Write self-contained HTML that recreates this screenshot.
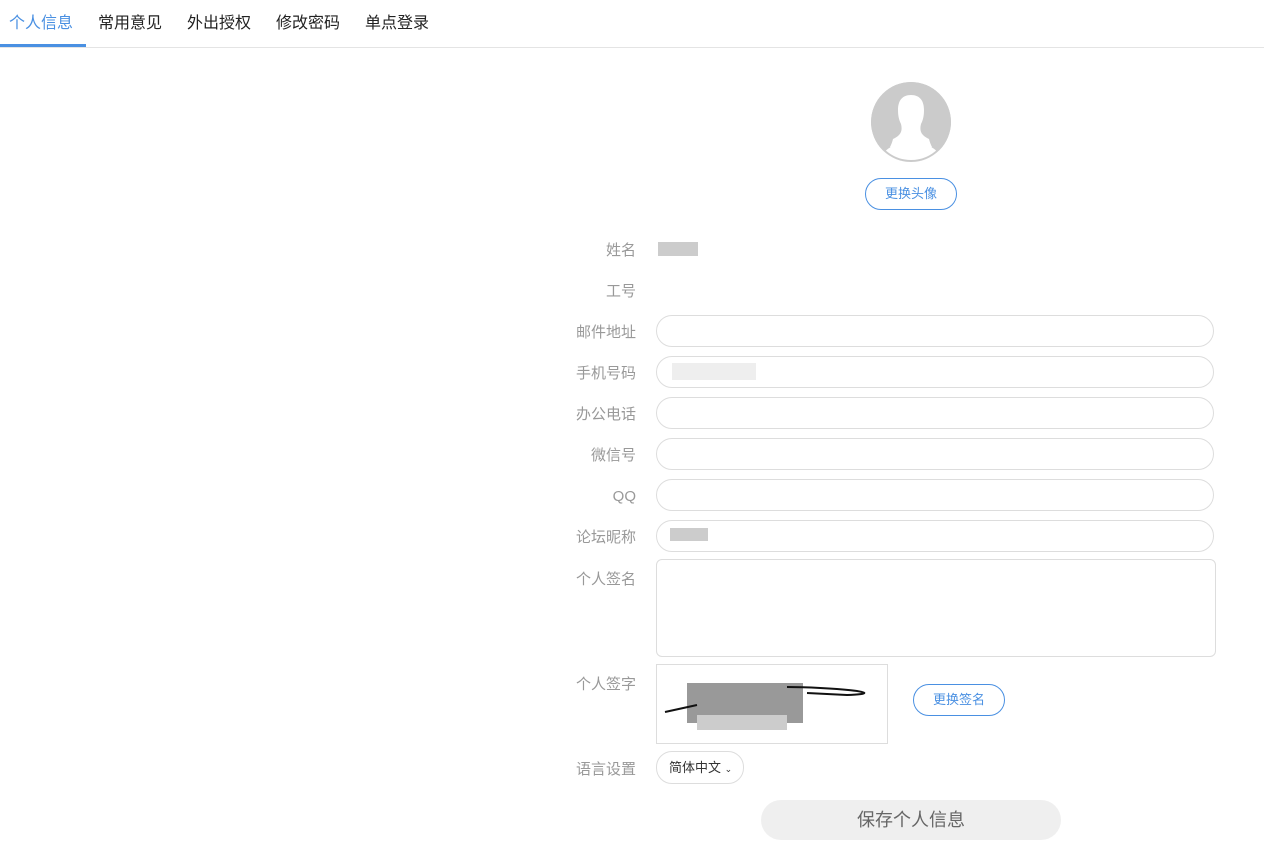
<!DOCTYPE html>
<html><head><meta charset="utf-8"><style>
*{box-sizing:border-box;margin:0;padding:0}
body{width:1264px;height:853px;background:#fff;font-family:"Liberation Sans","Noto Sans CJK SC",sans-serif;position:relative;overflow:hidden}
.tabs{position:absolute;left:0;top:0;width:1264px;height:48px;border-bottom:1px solid #e4e4e4}
.tab{position:absolute;top:14px;font-size:16px;color:#222;line-height:20px}
.ul{position:absolute;left:0;top:44px;width:86px;height:3px;background:#4a90e2}
.lbl{position:absolute;right:628px;font-size:15px;color:#999;line-height:20px;text-align:right;margin-top:2px}
.inp{position:absolute;left:656px;width:558px;height:32px;border:1px solid #ddd;border-radius:16px}
.av{position:absolute;left:871px;top:82px;width:80px;height:80px;border-radius:50%;background:#cbcbcb;overflow:hidden}
.btn{position:absolute;border:1px solid #4a90e2;border-radius:16px;color:#4a90e2;font-size:13px;text-align:center}
.blur{position:absolute;background:#ddd}
</style></head><body>
<div class="tabs">
<div class="tab" style="left:9px;color:#4a90e2">个人信息</div>
<div class="tab" style="left:98px">常用意见</div>
<div class="tab" style="left:187px">外出授权</div>
<div class="tab" style="left:276px">修改密码</div>
<div class="tab" style="left:365px">单点登录</div>
<div class="ul"></div>
</div>
<div class="av"><svg width="80" height="80" viewBox="0 0 80 80"><path d="M40 13c-9 0-13 6-13 15 0 6 1 10 3 14 1 4 1 8-2 11-2 2-4 3-6 4-1 4-2 6-3 8 6 4 13 7 21 7s15-3 21-7c-1-2-2-4-3-8-2-1-4-2-6-4-3-3-3-7-2-11 2-4 3-8 3-14 0-9-4-15-13-15z" fill="#fff"/><path d="M12 72c4-6 10-8 16-11l24 0c6 3 12 5 16 11l0 8-56 0z" fill="#fff"/><circle cx="40" cy="40" r="39" fill="none" stroke="#cbcbcb" stroke-width="2"/></svg></div>
<div class="btn" style="left:865px;top:178px;width:92px;height:32px;line-height:30px">更换头像</div>
<div class="lbl" style="top:239px">姓名</div>
<div class="blur" style="left:658px;top:242px;width:40px;height:14px;background:#ccc"></div>
<div class="lbl" style="top:280px">工号</div>
<div class="lbl" style="top:321px">邮件地址</div><div class="inp" style="top:315px"></div>
<div class="lbl" style="top:362px">手机号码</div><div class="inp" style="top:356px"></div>
<div class="blur" style="left:672px;top:363px;width:84px;height:17px;background:#eee"></div>
<div class="lbl" style="top:403px">办公电话</div><div class="inp" style="top:397px"></div>
<div class="lbl" style="top:444px">微信号</div><div class="inp" style="top:438px"></div>
<div class="lbl" style="top:485px">QQ</div><div class="inp" style="top:479px"></div>
<div class="lbl" style="top:526px">论坛昵称</div><div class="inp" style="top:520px"></div>
<div class="blur" style="left:670px;top:528px;width:38px;height:13px;background:#ccc"></div>
<div class="lbl" style="top:568px">个人签名</div>
<div class="inp" style="top:559px;height:98px;width:560px;border-radius:6px"></div>
<div class="lbl" style="top:673px">个人签字</div>
<div style="position:absolute;left:656px;top:664px;width:232px;height:80px;border:1px solid #ddd">
<div style="position:absolute;left:30px;top:18px;width:116px;height:40px;background:#999"></div>
<div style="position:absolute;left:40px;top:50px;width:90px;height:15px;background:#ccc"></div>
<svg style="position:absolute;left:0;top:0" width="232" height="80"><path d="M8 47 L40 40 M130 22 C170 22 240 28 190 30 L150 28" stroke="#111" fill="none" stroke-width="2"/></svg>
</div>
<div class="btn" style="left:913px;top:684px;width:92px;height:32px;line-height:30px">更换签名</div>
<div class="lbl" style="top:758px">语言设置</div>
<div style="position:absolute;left:656px;top:751px;width:88px;height:33px;border:1px solid #ddd;border-radius:16px;font-size:13px;color:#333;line-height:31px;padding-left:12px">简体中文 <span style="font-size:9px">&#x2304;</span></div>
<div style="position:absolute;left:761px;top:800px;width:300px;height:40px;background:#efefef;border-radius:20px;text-align:center;line-height:40px;font-size:18px;color:#666">保存个人信息</div>
</body></html>
